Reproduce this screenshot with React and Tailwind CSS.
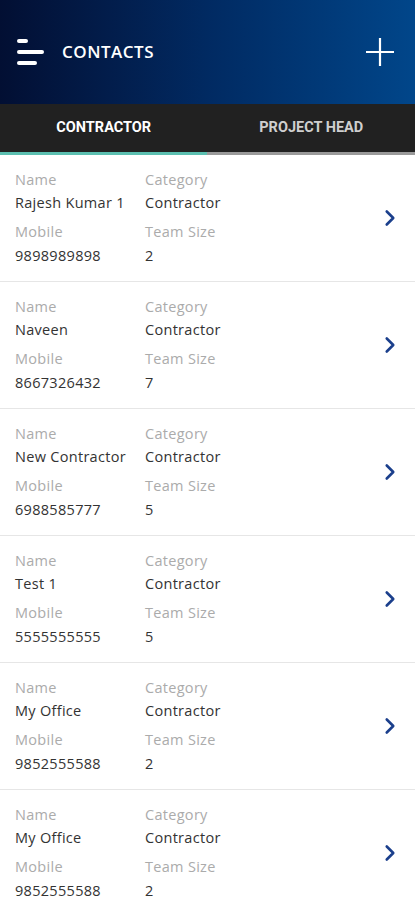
import { ChevronRight } from 'lucide-react';

const contacts = [
  { name: 'Rajesh Kumar 1', mobile: '9898989898', category: 'Contractor', team: '2' },
  { name: 'Naveen', mobile: '8667326432', category: 'Contractor', team: '7' },
  { name: 'New Contractor', mobile: '6988585777', category: 'Contractor', team: '5' },
  { name: 'Test 1', mobile: '5555555555', category: 'Contractor', team: '5' },
  { name: 'My Office', mobile: '9852555588', category: 'Contractor', team: '2' },
  { name: 'My Office', mobile: '9852555588', category: 'Contractor', team: '2' },
];

function ContactRow({ c }) {
  return (
    <div className="flex h-[127px] shrink-0 items-center border-b border-[#e6e6e6] pl-[15px] pr-[12px]">
      <div className="-mt-[2px] grid flex-1 grid-cols-[130px_1fr] gap-y-[10px] text-[14.5px] leading-[19px] tracking-[0.3px]">
        <div>
          <div className="text-[#ababab]">Name</div>
          <div className="mt-[4px] text-[#333333]">{c.name}</div>
        </div>
        <div>
          <div className="text-[#ababab]">Category</div>
          <div className="mt-[4px] text-[#333333]">{c.category}</div>
        </div>
        <div>
          <div className="text-[#ababab]">Mobile</div>
          <div className="mt-[5px] text-[#333333]">{c.mobile}</div>
        </div>
        <div>
          <div className="text-[#ababab]">Team Size</div>
          <div className="mt-[5px] text-[#333333]">{c.team}</div>
        </div>
      </div>
      <ChevronRight size={26} strokeWidth={2.4} color="#1b3f8c" />
    </div>
  );
}

export default function App() {
  return (
    <div className="flex h-[900px] w-[415px] flex-col overflow-hidden bg-white font-['Open_Sans',sans-serif]">
      <div className="flex h-[104px] shrink-0 items-center bg-gradient-to-r from-[#020f33] via-[#012a62] to-[#01468a] pl-[17px] pr-[20px]">
        <div className="flex flex-col gap-[7px]">
          <span className="h-[4px] w-[11px] rounded-full bg-white" />
          <span className="h-[4px] w-[27px] rounded-full bg-white" />
          <span className="h-[4px] w-[20px] rounded-full bg-white" />
        </div>
        <div className="ml-[18px] flex-1 text-[17px] font-semibold tracking-[0.5px] text-white">CONTACTS</div>
        <svg width="30" height="30" viewBox="0 0 30 30">
          <path d="M15 1v28M1 15h28" stroke="white" strokeWidth="2.2" />
        </svg>
      </div>
      <div className="flex h-[48px] shrink-0 bg-[#212121] font-['Roboto',sans-serif] text-[14.5px] font-bold">
        <div className="flex flex-1 items-center justify-center text-white">CONTRACTOR</div>
        <div className="flex flex-1 items-center justify-center text-[#cfcfcf]">PROJECT HEAD</div>
      </div>
      <div className="flex h-[3px] shrink-0">
        <div className="w-[207px] bg-[#5bbfb0]" />
        <div className="flex-1 bg-[#9a9a9a]" />
      </div>
      {contacts.map((c, i) => (
        <ContactRow key={i} c={c} />
      ))}
    </div>
  );
}
